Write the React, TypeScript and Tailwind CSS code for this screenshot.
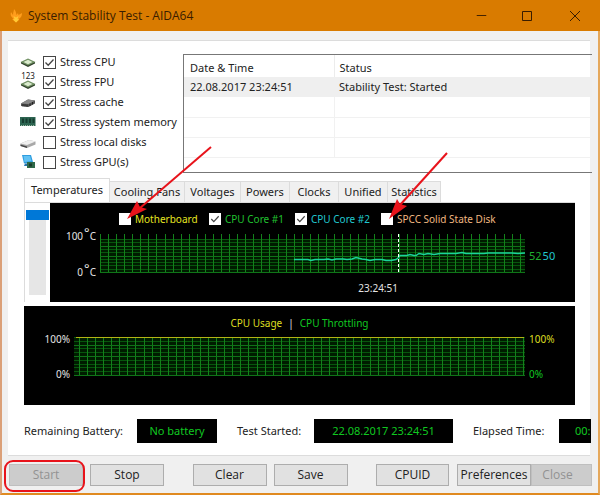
import { Minus } from "lucide-react";
import { FC, ReactNode } from "react";

const stressOptions = [
  { id: "cpu", label: "Stress CPU", checked: true },
  { id: "fpu", label: "Stress FPU", checked: true },
  { id: "cache", label: "Stress cache", checked: true },
  { id: "memory", label: "Stress system memory", checked: true },
  { id: "disks", label: "Stress local disks", checked: false },
  { id: "gpu", label: "Stress GPU(s)", checked: false },
];

const tabs = [
  { label: "Cooling Fans", width: "w-[75px]" },
  { label: "Voltages", width: "w-[56px]" },
  { label: "Powers", width: "w-[49px]" },
  { label: "Clocks", width: "w-[49px]" },
  { label: "Unified", width: "w-[49px]" },
  { label: "Statistics", width: "w-[53px]" },
];

const sensors = [
  { label: "Motherboard", color: "text-[#e6e620]", width: "w-[80px]", checked: false },
  { label: "CPU Core #1", color: "text-[#20c030]", width: "w-[76px]", checked: true },
  { label: "CPU Core #2", color: "text-[#20c8d0]", width: "w-[76px]", checked: true },
  { label: "SPCC Solid State Disk", color: "text-[#f0b880]", width: "w-[120px]", checked: false },
];

const Chip: FC<{ y?: number }> = ({ y = 0 }) => (
  <g transform={`translate(0 ${y})`}>
    <path d="M1 7v1.5l7 3.5 7-3.5V7z" fill="#33432f" />
    <path d="M8 3.5 15.5 7 8 10.5.5 7z" fill="#6f8f62" />
    <path d="M8 4.8 12.5 7 8 9.2 3.5 7z" fill="#dceccf" />
  </g>
);

const icons: Record<string, ReactNode> = {
  cpu: <Chip />,
  fpu: (
    <>
      <text x="8" y="4" textAnchor="middle" fontSize="8" fill="#222">
        123
      </text>
      <Chip y={2} />
    </>
  ),
  cache: (
    <>
      <path d="M1 8.5 8 4.5 15 5.5v3L8.5 12 1 11z" fill="#555" />
      <path d="M1 8.5 8 4.5 15 5.5 8.5 9z" fill="#888" />
      <path d="M3 9v2.500M5 9.200v2.500M7 9.500v2.500M10 8.500v2.500M12.500 7v2.500" stroke="#222" />
    </>
  ),
  memory: (
    <>
      <path d="M0 2h15.500v9H0z" fill="#2c6450" />
      <path d="M2 3.500h2V8H2zM5.500 3.500h2V8h-2zM9 3.500h2V8H9zM12.500 3.500h2V8h-2z" fill="#163c30" />
      <path d="M1 10.500h14" stroke="#9cb8a4" strokeDasharray="1 1" />
    </>
  ),
  disks: (
    <>
      <path d="M.5 8.500 9 5l6.500 1.500v3L7 13 .5 11z" fill="#a8a8a8" />
      <path d="M.5 8.500 9 5l6.500 1.500L7 10z" fill="#efefef" />
      <path d="M.5 9.500 7 11.500v1.500L.5 11z" fill="#444" />
    </>
  ),
  gpu: (
    <>
      <path d="M2 0h9l2 7-9 1.500z" fill="#2f9ddf" />
      <path d="M3.500 1H10l1.500 5-7 1z" fill="#62c2f4" />
      <path d="M5 8.500h2l1 2.500H4z" fill="#2775b0" />
      <path d="M7 7h8v6H7z" fill="#2e6848" />
      <path d="M9 8.500h3v3H9z" fill="#183d2b" />
    </>
  ),
};

type CheckProps = {
  id: string;
  checked: boolean;
  light?: boolean;
};

const Check: FC<CheckProps> = ({ id, checked, light }) => (
  <span className="relative flex shrink-0">
    <input
      id={id}
      type="checkbox"
      defaultChecked={checked}
      className={
        light
          ? "peer size-3 appearance-none bg-white"
          : "peer size-[13px] appearance-none border border-[#444] bg-white"
      }
    />
    <svg
      viewBox="0 0 13 13"
      className="pointer-events-none absolute inset-0 hidden size-full peer-checked:block"
    >
      <path d="M2.500 6.500 5.200 9.300 10.500 3.500" fill="none" stroke="#444" strokeWidth="1.300" />
    </svg>
  </span>
);

type GraphProps = {
  width: number;
  offset: number;
  top: number;
  children?: ReactNode;
};

const Graph: FC<GraphProps> = ({ width, offset, top, children }) => {
  const columns = Array.from({ length: Math.ceil((width - offset) / 8.07) }, (_, i) =>
    Math.round(offset + i * 8.07) + 0.5
  );
  const rows = Array.from({ length: 11 }, (_, i) => Math.round(top + (i * (38 - top)) / 10) + 0.5);

  return (
    <svg
      viewBox={`0 0 ${width} 39`}
      preserveAspectRatio="none"
      className="h-[39px] min-w-0 flex-1"
    >
      <rect y={top} width={width} height={39 - top} fill="#001c00" />
      <path d={rows.map((y) => `M0 ${y}H${width}`).join("")} stroke="#07560d" />
      <path d={columns.map((x) => `M${x} 0V39`).join("")} stroke="#13821b" />
      <path d={`M0 ${rows[2]}H${width}M0 ${rows[5]}H${width}M0 38.500H${width}`} stroke="#0f7418" />
      {children}
    </svg>
  );
};

const Button: FC<{ children: string; disabled?: boolean; className: string }> = ({
  children,
  disabled,
  className,
}) => (
  <button
    type="button"
    disabled={disabled}
    className={`h-[22px] shrink-0 border border-[#adadad] bg-[#e1e1e1] font-['Open_Sans','Noto_Sans',sans-serif] text-[12px] text-[#222] disabled:border-[#bfbfbf] disabled:bg-[#cccccc] disabled:text-[#929292] ${className}`}
  >
    {children}
  </button>
);

type ReadoutProps = {
  label: string;
  value: string;
  labelWidth: string;
  className: string;
};

const Readout: FC<ReadoutProps> = ({ label, value, labelWidth, className }) => (
  <div className="flex shrink-0 items-center gap-3">
    <span className={labelWidth}>{label}</span>
    <output className={`h-6 bg-black text-center leading-6 text-[#10c820] ${className}`}>
      {value}
    </output>
  </div>
);

const Degrees: FC<{ value: number }> = ({ value }) => (
  <span className="flex h-3 items-center justify-end">
    {value}
    <span className="mb-2 ml-px text-[13px]">°</span>C
  </span>
);

const TitleBar = () => (
  <header className="flex h-[31px] shrink-0 items-center bg-[#d97b00] text-[#3a1d00]">
    <svg viewBox="0 0 16 16" className="mr-1 ml-2 size-4">
      <path d="M8 14.500 4 11l1.500-.500C3 9 2 7 3 4l2 3c0-3 1-4 1-6 2 2 2 4 2.500 6L10 5l.500 2L14 5c0 3-1 5-3.500 6l1 .500z" fill="#ff9d1c" />
      <path d="M8 14.500 5 11.500l1.500-.500L5.500 8 8 9.500 10.500 8l-1 3 1.500.500z" fill="#ffc935" />
    </svg>
    <h1 className="flex-1 font-['Open_Sans','Noto_Sans',sans-serif] text-[12px]">
      System Stability Test - AIDA64
    </h1>
    <button type="button" aria-label="Minimize" className="flex w-12 justify-center">
      <Minus size={15} strokeWidth={1.5} />
    </button>
    <button type="button" aria-label="Maximize" className="flex w-11 justify-center">
      <svg viewBox="0 0 12 12" className="size-3">
        <path d="M1.500 1.500h9v9h-9z" fill="none" stroke="currentColor" />
      </svg>
    </button>
    <button type="button" aria-label="Close window" className="flex w-[51px] justify-center">
      <svg viewBox="0 0 12 12" className="size-3">
        <path d="m1 1 10 10M11 1 1 11" fill="none" stroke="currentColor" />
      </svg>
    </button>
  </header>
);

const EventLog = () => (
  <div className="mt-[2px] -mr-[2px] h-[119px] min-w-0 flex-1 border-y border-l border-[#777]">
    <table className="w-full table-fixed border-collapse text-left">
      <thead>
        <tr className="h-[22px]">
          <th className="w-[150px] border-r border-[#ececec] pt-1 pl-[6px] font-normal">Date &amp; Time</th>
          <th className="pt-1 pl-[5px] font-normal">Status</th>
        </tr>
      </thead>
      <tbody>
        <tr className="h-5 bg-[#efefef]">
          <td className="pl-[6px]">22.08.2017 23:24:51</td>
          <td className="pl-[5px]">Stability Test: Started</td>
        </tr>
        {[0, 1, 2].map((row) => (
          <tr key={row} className="h-5 border-b border-[#f1f1f1]">
            <td className="border-r border-[#f1f1f1]" />
            <td />
          </tr>
        ))}
      </tbody>
    </table>
  </div>
);

const Temperatures = () => (
  <div className="flex border-l border-[#dcdcdc]">
    <div className="flex w-[25px] flex-col items-center pt-[7px]">
      <div className="h-[10px] w-[23px] bg-[#0078d7]" />
      <div className="h-[75px] w-[17px] bg-[#e6e6e6]" />
    </div>
    <div className="h-[99px] min-w-0 flex-1 bg-black text-[10px] text-[#e4e4e4]">
      <div className="flex h-[31px] items-center gap-[10px] pt-px pl-[69px]">
        {sensors.map(({ label, color, width, checked }) => (
          <div key={label} className={`flex items-center gap-1 whitespace-nowrap ${width}`}>
            <Check id={label} checked={checked} light />
            <label htmlFor={label} className={color}>
              {label}
            </label>
          </div>
        ))}
      </div>
      <div className="flex">
        <div className="-mt-1 flex h-12 w-[50px] flex-col justify-between pr-1">
          <Degrees value={100} />
          <Degrees value={0} />
        </div>
        <Graph width={425} offset={0} top={5}>
          <path
            d="M194 25.500H208L211 26.500 215 25.500H224L228 25 232 26 236 25H243L247 25.500 252 25 256 23.500 262 25 266 25.500 270 26.500 275 25.500H282L286 26.500H291L296 25.500 298 24 300 21.500H307L310 20.500 314 21.500 316 21.500 319 19.500 324 20.500 328 19.500 334 20.500 340 19.500H356L362 18.500 366 19.500H384L388 19H412L418 19.500 425 19"
            fill="none"
            stroke="#1bd49a"
            strokeWidth="1.500"
          />
          <path d="M298.500 0V39" stroke="#fff" strokeDasharray="3 2" />
        </Graph>
        <div className="flex w-[50px] items-center gap-px pl-1 text-[11px]">
          <span className="text-[#20b030]">52</span>
          <span className="text-[#20c8d0]">50</span>
        </div>
      </div>
      <div className="flex">
        <time className="w-[348px] pt-[2px] text-right">23:24:51</time>
      </div>
    </div>
  </div>
);

const CpuUsage = () => (
  <div className="mt-1 h-[99px] bg-black text-[10px] text-[#e4e4e4]">
    <div className="flex h-[31px] items-center justify-center gap-[6px] pt-[2px]">
      <span className="text-[#dede20]">CPU Usage</span>
      <span>|</span>
      <span className="text-[#10c820]">CPU Throttling</span>
    </div>
    <div className="flex">
      <div className="-my-1 flex w-[50px] flex-col justify-between pr-1 text-right leading-3">
        <span>100%</span>
        <span>0%</span>
      </div>
      <Graph width={451} offset={5} top={0}>
        <path d="M2 .500H450" stroke="#b4b414" />
      </Graph>
      <div className="-my-1 flex w-[50px] flex-col justify-between pl-1 leading-3">
        <span className="text-[#dede20]">100%</span>
        <span className="text-[#10c820]">0%</span>
      </div>
    </div>
  </div>
);

export default function App() {
  return (
    <div className="relative flex min-h-screen flex-col overflow-hidden bg-[#f0f0f0] font-['Noto_Sans','Open_Sans',sans-serif] text-[11px] leading-4 text-[#222]">
      <TitleBar />

      <div className="flex flex-1 flex-col border-x-2 border-b-2 border-l-[#dba078] border-r-[#e5a85c] border-b-[#e08a20]">
        <main className="mx-[6px] mt-[9px] overflow-hidden">
          <section className="mr-[2px] border-t border-b border-[#dcdcdc] bg-white">
            <div className="flex pt-[11px]">
              <ul className="w-[175px] shrink-0 pl-3">
                {stressOptions.map(({ id, label, checked }) => (
                  <li key={id} className="flex h-5 items-center whitespace-nowrap">
                    <svg viewBox="0 0 16 14" className="mr-[7px] h-[14px] w-4 overflow-visible">
                      {icons[id]}
                    </svg>
                    <Check id={id} checked={checked} />
                    <label htmlFor={id} className="pl-1">
                      {label}
                    </label>
                  </li>
                ))}
              </ul>
              <EventLog />
            </div>

            <div className="mt-[5px] mr-[15px] ml-4">
              <div role="tablist" className="flex items-end border-b border-[#dcdcdc]">
                <button
                  type="button"
                  role="tab"
                  aria-selected="true"
                  className="h-6 w-[86px] border border-b-0 border-[#dcdcdc] bg-white pb-px"
                >
                  Temperatures
                </button>
                {tabs.map(({ label, width }) => (
                  <button
                    key={label}
                    type="button"
                    role="tab"
                    aria-selected="false"
                    className={`h-[21px] border-t border-r border-[#dcdcdc] bg-[#f0f0f0] whitespace-nowrap ${width}`}
                  >
                    {label}
                  </button>
                ))}
              </div>
              <Temperatures />
              <CpuUsage />
            </div>

            <div className="-mr-[2px] flex gap-5 overflow-hidden pt-[14px] pb-3 pl-4 whitespace-nowrap">
              <Readout
                label="Remaining Battery:"
                value="No battery"
                labelWidth="w-[101px]"
                className="w-20"
              />
              <Readout
                label="Test Started:"
                value="22.08.2017 23:24:51"
                labelWidth="w-[65px]"
                className="w-[139px]"
              />
              <Readout
                label="Elapsed Time:"
                value="00:"
                labelWidth="w-[74px]"
                className="pl-4"
              />
            </div>
          </section>
        </main>

        <footer className="mr-[6px] ml-[7px] flex justify-between pt-2 pb-[5px]">
          <div className="flex gap-[7px]">
            <Button disabled className="w-[74px]">Start</Button>
            <Button className="w-[74px]">Stop</Button>
          </div>
          <div className="flex gap-[7px]">
            <Button className="w-[74px]">Clear</Button>
            <Button className="w-[74px]">Save</Button>
          </div>
          <div className="flex">
            <Button className="mr-2 w-[73px]">CPUID</Button>
            <Button className="w-[74px]">Preferences</Button>
            <Button disabled className="w-[61px] pr-2">Close</Button>
          </div>
        </footer>
      </div>

      {/* Hand-drawn callouts over the window */}
      <svg
        width="600"
        height="495"
        viewBox="0 0 600 495"
        className="pointer-events-none absolute top-0 left-0"
      >
        <g stroke="#e8131b" strokeWidth="2" fill="none">
          <path d="M211 147 140 208" />
          <path d="M447 153 400 205" />
          <rect x="5" y="461" width="79" height="30" rx="8" />
        </g>
        <path d="M127 219 137 201 140 207 147 209z" fill="#e8131b" />
        <path d="M389 219 397 199 400 204 407 206z" fill="#e8131b" />
      </svg>
    </div>
  );
}
